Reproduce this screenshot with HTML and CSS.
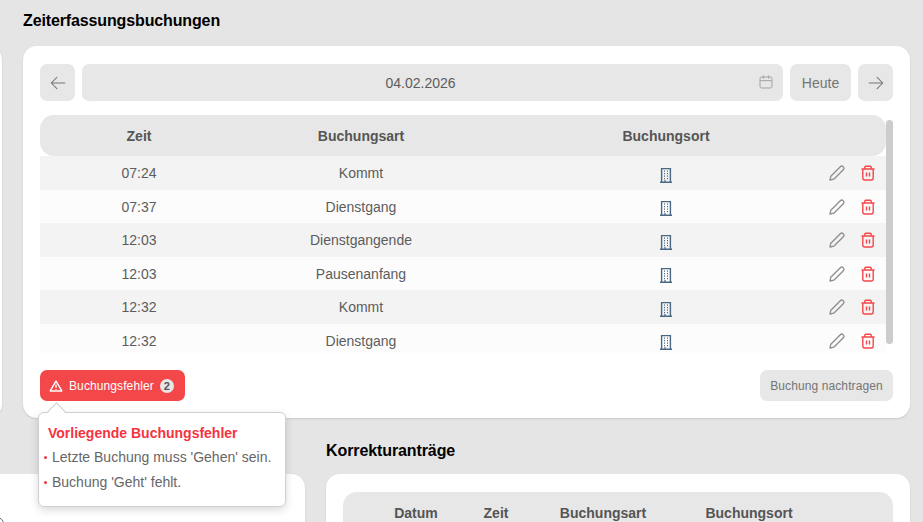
FILE: index.html
```html
<!DOCTYPE html>
<html lang="de">
<head>
<meta charset="utf-8">
<title>Zeiterfassungsbuchungen</title>
<link rel="stylesheet" href="styles.css">
</head>
<body>
<main class="page">
  <div class="row row-top">
    <section class="section section-side-top">
      <div class="card card-side"></div>
    </section>
    <section class="section section-main">
      <h2 class="title title-main">Zeiterfassungsbuchungen</h2>
      <div class="card card-main">
        <div class="toolbar">
          <button class="tool tool-icon" aria-label="Zurück">
            <svg class="arrow" viewBox="0 0 24 24"><path d="M10.500 19.500 3 12l7.500-7.500M3 12h18"/></svg>
          </button>
          <div class="date">
            <span class="date-text">04.02.2026</span>
            <svg class="cal" viewBox="0 0 24 24"><rect x="3" y="4.500" width="18" height="16.500" rx="2.500"/><path d="M8 2v5M16 2v5M3 10h18"/></svg>
          </div>
          <button class="tool tool-today">Heute</button>
          <button class="tool tool-icon" aria-label="Vor">
            <svg class="arrow" viewBox="0 0 24 24"><path d="M13.500 4.500 21 12l-7.500 7.500M21 12H3"/></svg>
          </button>
        </div>
        <div class="table-wrap">
          <div class="table">
            <div class="thead">
              <div>Zeit</div><div>Buchungsart</div><div class="c-ort">Buchungsort</div><div></div>
            </div>
            <div class="tr odd">
              <div>07:24</div><div>Kommt</div>
              <div class="c-ort"><svg class="bld" viewBox="0 0 12 16"><use href="#i-building"/></svg></div>
              <div class="actions"><svg class="pen" viewBox="0 0 16 16"><use href="#i-pen"/></svg><svg class="trash" viewBox="0 0 16 16"><use href="#i-trash"/></svg></div>
            </div>
            <div class="tr">
              <div>07:37</div><div>Dienstgang</div>
              <div class="c-ort"><svg class="bld" viewBox="0 0 12 16"><use href="#i-building"/></svg></div>
              <div class="actions"><svg class="pen" viewBox="0 0 16 16"><use href="#i-pen"/></svg><svg class="trash" viewBox="0 0 16 16"><use href="#i-trash"/></svg></div>
            </div>
            <div class="tr odd">
              <div>12:03</div><div>Dienstgangende</div>
              <div class="c-ort"><svg class="bld" viewBox="0 0 12 16"><use href="#i-building"/></svg></div>
              <div class="actions"><svg class="pen" viewBox="0 0 16 16"><use href="#i-pen"/></svg><svg class="trash" viewBox="0 0 16 16"><use href="#i-trash"/></svg></div>
            </div>
            <div class="tr">
              <div>12:03</div><div>Pausenanfang</div>
              <div class="c-ort"><svg class="bld" viewBox="0 0 12 16"><use href="#i-building"/></svg></div>
              <div class="actions"><svg class="pen" viewBox="0 0 16 16"><use href="#i-pen"/></svg><svg class="trash" viewBox="0 0 16 16"><use href="#i-trash"/></svg></div>
            </div>
            <div class="tr odd">
              <div>12:32</div><div>Kommt</div>
              <div class="c-ort"><svg class="bld" viewBox="0 0 12 16"><use href="#i-building"/></svg></div>
              <div class="actions"><svg class="pen" viewBox="0 0 16 16"><use href="#i-pen"/></svg><svg class="trash" viewBox="0 0 16 16"><use href="#i-trash"/></svg></div>
            </div>
            <div class="tr">
              <div>12:32</div><div>Dienstgang</div>
              <div class="c-ort"><svg class="bld" viewBox="0 0 12 16"><use href="#i-building"/></svg></div>
              <div class="actions"><svg class="pen" viewBox="0 0 16 16"><use href="#i-pen"/></svg><svg class="trash" viewBox="0 0 16 16"><use href="#i-trash"/></svg></div>
            </div>
          </div>
          <div class="scrollbar"><div class="thumb"></div></div>
        </div>
        <div class="footer">
          <div class="error-wrap">
            <button class="error-btn">
              <svg class="warn" viewBox="0 0 24 24"><path d="M12 3.500 2 20.500h20zM12 9.500v5.500M12 17v1.500"/></svg>
              <span>Buchungsfehler</span>
              <span class="badge">2</span>
            </button>
            <div class="popover">
              <span class="popover-arrow"></span>
              <h3 class="popover-title">Vorliegende Buchungsfehler</h3>
              <ul class="popover-list">
                <li>Letzte Buchung muss 'Gehen' sein.</li>
                <li>Buchung 'Geht' fehlt.</li>
              </ul>
            </div>
          </div>
          <button class="add-btn">Buchung nachtragen</button>
        </div>
      </div>
    </section>
  </div>
  <div class="row row-bottom">
    <section class="section section-side-bottom">
      <div class="card card-side-bottom"><span class="peek-icon"></span></div>
    </section>
    <section class="section section-corr">
      <h2 class="title title-corr">Korrekturanträge</h2>
      <div class="card card-corr">
        <div class="corr-head">
          <div>Datum</div><div>Zeit</div><div>Buchungsart</div><div>Buchungsort</div>
        </div>
      </div>
    </section>
  </div>
</main>
<svg class="defs" aria-hidden="true">
  <symbol id="i-building" viewBox="0 0 12 16">
    <path d="M1.600 15V1.600h8.800V15M0 15.300h12" fill="none" stroke="#4a6784" stroke-width="1.400"/>
    <path d="M4 4.200h1M7 4.200h1M4 6.700h1M7 6.700h1M4 9.200h1M7 9.200h1M4 11.700h1M7 11.700h1M5 15v-2" fill="none" stroke="#4a6784" stroke-width="1.200"/>
  </symbol>
  <symbol id="i-pen" viewBox="0 0 16 16">
    <path d="M1 15 1.800 11.200 11.300 1.700a2 2 0 0 1 2.800 0l.2.200a2 2 0 0 1 0 2.800L4.800 14.200z" fill="none" stroke="#8e8e8e" stroke-width="1.300" stroke-linejoin="round"/>
  </symbol>
  <symbol id="i-trash" viewBox="0 0 16 16">
    <path d="M1.500 4h13M4.800 4V2.300A1 1 0 0 1 5.800 1.300h4.400a1 1 0 0 1 1 1V4M2.800 4v9a2 2 0 0 0 2 2h6.400a2 2 0 0 0 2-2V4M6.500 7.500v4M9.500 7.500v4" fill="none" stroke="#f4474a" stroke-width="1.400"/>
  </symbol>
</svg>
</body>
</html>
```

FILE: styles.css
```css
* { box-sizing: border-box; }
html, body { margin: 0; height: 100%; overflow: hidden; }
body { background: #e5e5e5; font-family: "Liberation Sans", Arial, sans-serif; color: #5c5c5c; font-size: 14px; }
button { font-family: inherit; border: 0; cursor: pointer; }
.page { width: 923px; height: 522px; overflow: hidden; display: flex; flex-direction: column; gap: 21px; }
.row { display: flex; gap: 21px; flex: none; }
.row-top { height: 418px; margin-left: -98px; }
.section { display: flex; flex-direction: column; flex: none; }
.section-side-top { width: 100px; padding-top: 46px; }
.section-main { width: 887px; padding-top: 11px; }
.title { margin: 0; flex: none; font-size: 16px; line-height: 19px; font-weight: 700; color: #000; }
.title-main { height: 35px; letter-spacing: -.13px; }
.title-corr { height: 33px; letter-spacing: -.1px; }
.card { flex: none; background: #fff; border-radius: 14px; box-shadow: 0 1px 2px rgba(0,0,0,.12); }
.card-side { height: 372px; }
.card-main { height: 372px; padding: 18px 17px 17px; display: flex; flex-direction: column; }
.toolbar { display: flex; gap: 7px; height: 37px; flex: none; }
.tool { background: #e7e7e7; border-radius: 7px; color: #757575; font-size: 14px; display: flex; align-items: center; justify-content: center; padding: 0; }
.tool-icon { width: 35px; }
.tool-today { width: 61px; }
.arrow { width: 18px; height: 18px; fill: none; stroke: #757575; stroke-width: 1.400; stroke-linecap: round; stroke-linejoin: round; }
.date { flex: 1; background: #e7e7e7; border-radius: 7px; display: flex; align-items: center; justify-content: center; position: relative; color: #5c5c5c; padding-right: 24px; }
.cal { position: absolute; right: 9px; top: 10px; width: 16px; height: 16px; fill: none; stroke: #a3a3a3; stroke-width: 1.500; }
.table-wrap { display: flex; margin-top: 14px; height: 238px; overflow: hidden; }
.table { width: 846px; flex: none; }
.thead, .tr { display: grid; grid-template-columns: 198px 246px 300px 1fr; align-items: center; text-align: center; }
.thead { height: 41.400px; background: #e7e7e7; border-radius: 14px; font-weight: 700; color: #555; }
.tr { height: 33.500px; background: #fcfcfc; }
.tr.odd { background: #f3f3f3; }
.c-ort { padding-left: 64px; }
.bld { width: 12px; height: 16px; display: block; margin: 3px auto 0; }
.actions { display: flex; justify-content: flex-end; gap: 15px; padding-right: 10px; }
.pen, .trash { width: 16px; height: 16px; display: block; }
.scrollbar { flex: 1; padding: 5px 0 9px; }
.thumb { height: 100%; background: #ccc; border-radius: 4px; }
.footer { margin-top: 17px; display: flex; justify-content: space-between; height: 31px; }
.error-wrap { position: relative; }
.error-btn { height: 31px; width: 145px; background: #f4474a; color: #fff; border-radius: 7px; font-size: 12px; letter-spacing: .1px; display: flex; align-items: center; padding: 0 9px; }
.warn { width: 14px; height: 14px; margin-right: 6px; fill: none; stroke: #fff; stroke-width: 2.400; stroke-linejoin: round; }
.badge { margin-left: 6px; width: 14px; height: 14px; border-radius: 50%; background: #e7e7e7; color: #555; font-weight: 700; font-size: 11px; line-height: 14px; text-align: center; }
.add-btn { height: 31px; width: 133px; background: #e7e7e7; color: #757575; border-radius: 7px; font-size: 12px; letter-spacing: .1px; padding: 0; }
.popover { position: absolute; left: -2px; top: 42px; width: 248px; height: 95px; background: #fff; border: 1px solid #d0d0d0; border-radius: 6px; box-shadow: 0 3px 8px rgba(0,0,0,.15); padding: 12px 9px 0; z-index: 5; }
.popover-arrow { position: absolute; left: 11px; top: -8px; width: 13px; height: 13px; background: #fff; border-left: 1px solid #d0d0d0; border-top: 1px solid #d0d0d0; transform: rotate(45deg); }
.popover-title { margin: 0; font-size: 14px; line-height: 16px; color: #f5333f; font-weight: 700; }
.popover-list { list-style: none; margin: 4px 0 0 -5px; padding: 0; }
.popover-list li { font-size: 14px; line-height: 25px; color: #666; padding-left: 9px; position: relative; }
.popover-list li::before { content: ""; position: absolute; left: 1px; top: 11px; width: 3px; height: 3px; border-radius: 50%; background: #f5333f; }
.row-bottom { height: 83px; margin-left: -100px; }
.section-side-bottom { width: 405px; padding-top: 35px; }
.card-side-bottom { height: 100px; padding: 43px 0 0 90px; }
.peek-icon { display: block; width: 14px; height: 14px; border: 1.500px solid #4a6784; border-radius: 50%; }
.section-corr { width: 584px; padding-top: 2px; }
.card-corr { height: 100px; padding: 18px 17px; }
.corr-head { height: 42px; background: #e7e7e7; border-radius: 14px; display: grid; grid-template-columns: 106px 54px 160px 132px; font-weight: 700; color: #555; align-items: center; padding-left: 20px; }
.corr-head div { text-align: center; }
.defs { position: absolute; width: 0; height: 0; }
```
